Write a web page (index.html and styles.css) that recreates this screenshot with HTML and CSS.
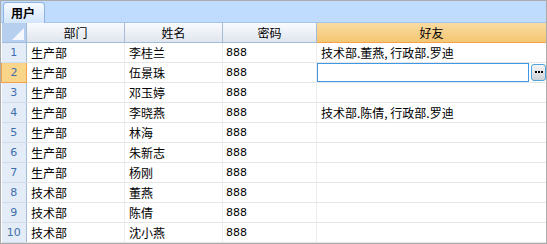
FILE: index.html
```html
<!DOCTYPE html>
<html lang="zh-CN">
<head>
    <meta charset="UTF-8">
    <title>用户</title>
    <link rel="stylesheet" href="styles.css">
</head>
<body>
    <div class="window">
        <div class="tabbar">
            <div class="tab">用户</div>
        </div>
        <table class="grid">
            <colgroup>
                <col class="c-num">
                <col class="c-dept">
                <col class="c-name">
                <col class="c-pwd">
                <col>
            </colgroup>
            <thead>
                <tr>
                    <th class="corner"><span class="tri"></span></th>
                    <th>部门</th>
                    <th>姓名</th>
                    <th>密码</th>
                    <th class="active">好友</th>
                </tr>
            </thead>
            <tbody>
                <tr><td class="num">1</td><td>生产部</td><td>李桂兰</td><td class="pwd">888</td><td>技术部.董燕, 行政部.罗迪</td></tr>
                <tr class="current">
                    <td class="num">2</td><td>生产部</td><td>伍景珠</td><td class="pwd">888</td>
                    <td class="edit-cell">
                        <div class="editor">
                            <input type="text" class="edit-box">
                            <button class="dots"><i></i><i></i><i></i></button>
                        </div>
                    </td>
                </tr>
                <tr><td class="num">3</td><td>生产部</td><td>邓玉婷</td><td class="pwd">888</td><td></td></tr>
                <tr><td class="num">4</td><td>生产部</td><td>李晓燕</td><td class="pwd">888</td><td>技术部.陈倩, 行政部.罗迪</td></tr>
                <tr><td class="num">5</td><td>生产部</td><td>林海</td><td class="pwd">888</td><td></td></tr>
                <tr><td class="num">6</td><td>生产部</td><td>朱新志</td><td class="pwd">888</td><td></td></tr>
                <tr><td class="num">7</td><td>生产部</td><td>杨刚</td><td class="pwd">888</td><td></td></tr>
                <tr><td class="num">8</td><td>技术部</td><td>董燕</td><td class="pwd">888</td><td></td></tr>
                <tr><td class="num">9</td><td>技术部</td><td>陈倩</td><td class="pwd">888</td><td></td></tr>
                <tr><td class="num">10</td><td>技术部</td><td>沈小燕</td><td class="pwd">888</td><td></td></tr>
            </tbody>
        </table>
    </div>
</body>
</html>
```

FILE: styles.css
```css
* {
    margin: 0;
    padding: 0;
    box-sizing: border-box;
}

body {
    background: #ffffff;
    font-family: "Noto Sans CJK SC", "Liberation Sans", sans-serif;
    font-size: 12px;
    color: #000;
}

.window {
    width: 547px;
    height: 244px;
    border: 1px solid #acacac;
    overflow: hidden;
    background: #fff;
}

.tabbar {
    height: 22px;
    background: #bfdbfe;
    display: flex;
    align-items: flex-end;
    padding-left: 2px;
    border-bottom: 1px solid #a5c4ea;
}

.tab {
    width: 42px;
    height: 21px;
    margin-bottom: -1px;
    border: 1px solid #8fb3e2;
    border-bottom: none;
    border-radius: 4px 4px 0 0;
    background: linear-gradient(#f6faff, #d3e5fc);
    font-weight: bold;
    font-size: 12px;
    line-height: 19px;
    padding-left: 7px;
}

.grid {
    width: 545px;
    border-collapse: collapse;
    table-layout: fixed;
}

.c-num { width: 25px; }
.c-dept { width: 98px; }
.c-name { width: 98px; }
.c-pwd { width: 94px; }

.grid th {
    height: 19px;
    font-weight: normal;
    font-size: 12px;
    line-height: 17px;
    text-align: center;
    background: linear-gradient(#f9fbfd, #dfe5ee);
    border-right: 1px solid #a3bcd8;
    border-bottom: 1px solid #a3bcd8;
}

.grid th.corner {
    background: #b7cfee;
    position: relative;
}

.tri {
    position: absolute;
    right: 2px;
    bottom: 2px;
    width: 0;
    height: 0;
    border-left: 12px solid transparent;
    border-bottom: 12px solid #f4f8fd;
}

.grid th.active {
    background: linear-gradient(#f9dba2, #f4c672);
    border-left: 1px solid #f0a34a;
    border-bottom: 1px solid #f0a34a;
    border-right: none;
}

.grid td {
    height: 20px;
    padding: 0 4px;
    line-height: 19px;
    white-space: nowrap;
    overflow: hidden;
    border-right: 1px solid #ececec;
    border-bottom: 1px solid #e6e6e6;
}

.grid td:last-child {
    border-right: none;
}

.grid td.num {
    background: #e3ecf7;
    color: #3e6eab;
    text-align: center;
    padding: 0;
    font-family: "DejaVu Sans", sans-serif;
    font-size: 11px;
    border-right: 1px solid #a3bcd8;
    border-bottom: 1px solid #cfdcec;
}

.grid tr.current td.num {
    background: #f9d58a;
    border: 1px solid #f0a34a;
}

.grid td.pwd {
    font-family: "DejaVu Sans", sans-serif;
    font-size: 11px;
    padding-left: 3px;
}

.grid td.edit-cell {
    padding: 0;
}

.editor {
    display: flex;
    align-items: center;
    gap: 2px;
    height: 19px;
}

.edit-box {
    width: 213px;
    height: 19px;
    border: 1px solid #3e98e4;
    outline: none;
    background: #fff;
}

.dots {
    width: 15px;
    height: 17px;
    border: 1px solid #4ea4dc;
    border-radius: 3px;
    background: linear-gradient(#f7f7f7, #cdd1d6);
    display: flex;
    align-items: center;
    justify-content: center;
    gap: 1px;
}

.dots i {
    width: 2px;
    height: 2px;
    background: #000;
}
```
